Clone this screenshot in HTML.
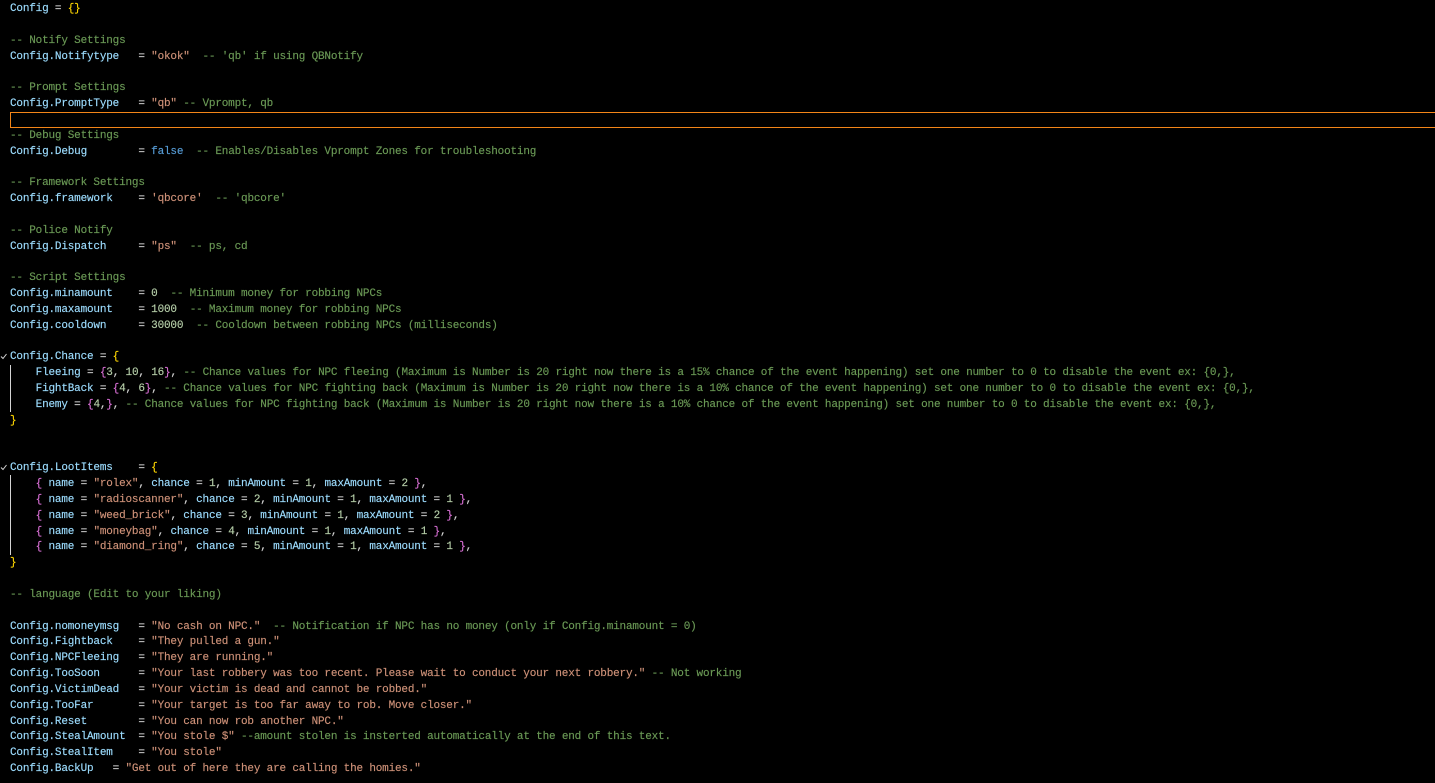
<!DOCTYPE html>
<html><head><meta charset="utf-8"><style>
html,body{margin:0;padding:0;background:#000;width:1435px;height:783px;overflow:hidden}
#e{position:relative;width:1435px;height:783px;overflow:hidden;font-family:"Liberation Mono",monospace;font-size:11px;letter-spacing:-.185px;color:#d4d4d4;-webkit-text-stroke:.15px}
#e div.l{position:absolute;left:10px;height:16px;line-height:16px;white-space:pre;margin-top:1px}
.c{color:#9cdcfe}.m{color:#6a9955}.s{color:#ce9178}.n{color:#b5cea8}.k{color:#569cd6}.y{color:#ffd700}.p{color:#da70d6}.b{color:#179fff}
.g{position:absolute;left:10px;width:1px;background:#d4d4d4}
</style></head><body><div id="e">
<div style="position:absolute;left:10px;top:112px;right:-2px;height:14px;border:1px solid #f38518"></div>
<div class="g" style="top:365px;height:47px"></div>
<div class="g" style="top:475px;height:80px"></div>
<svg style="position:absolute;left:0;top:352px" width="8" height="8"><path d="M1 4.5L3 6.5L6.5 2" fill="none" stroke="#d4d4d4"/></svg>
<svg style="position:absolute;left:0;top:463px" width="8" height="8"><path d="M1 4.5L3 6.5L6.5 2" fill="none" stroke="#d4d4d4"/></svg>
<div class="l" style="top:0px"><span class="c">Config</span> = <span class="y">{}</span></div>
<div class="l" style="top:32px"><span class="m">-- Notify Settings</span></div>
<div class="l" style="top:48px"><span class="c">Config.Notifytype</span>   = <span class="s">"okok"</span>  <span class="m">-- 'qb' if using QBNotify</span></div>
<div class="l" style="top:79px"><span class="m">-- Prompt Settings</span></div>
<div class="l" style="top:95px"><span class="c">Config.PromptType</span>   = <span class="s">"qb"</span> <span class="m">-- Vprompt, qb</span></div>
<div class="l" style="top:127px"><span class="m">-- Debug Settings</span></div>
<div class="l" style="top:143px"><span class="c">Config.Debug</span>        = <span class="k">false</span>  <span class="m">-- Enables/Disables Vprompt Zones for troubleshooting</span></div>
<div class="l" style="top:174px"><span class="m">-- Framework Settings</span></div>
<div class="l" style="top:190px"><span class="c">Config.framework</span>    = <span class="s">'qbcore'</span>  <span class="m">-- 'qbcore'</span></div>
<div class="l" style="top:222px"><span class="m">-- Police Notify</span></div>
<div class="l" style="top:238px"><span class="c">Config.Dispatch</span>     = <span class="s">"ps"</span>  <span class="m">-- ps, cd</span></div>
<div class="l" style="top:269px"><span class="m">-- Script Settings</span></div>
<div class="l" style="top:285px"><span class="c">Config.minamount</span>    = <span class="n">0</span>  <span class="m">-- Minimum money for robbing NPCs</span></div>
<div class="l" style="top:301px"><span class="c">Config.maxamount</span>    = <span class="n">1000</span>  <span class="m">-- Maximum money for robbing NPCs</span></div>
<div class="l" style="top:317px"><span class="c">Config.cooldown</span>     = <span class="n">30000</span>  <span class="m">-- Cooldown between robbing NPCs (milliseconds)</span></div>
<div class="l" style="top:348px"><span class="c">Config.Chance</span> = <span class="y">{</span></div>
<div class="l" style="top:364px">    <span class="c">Fleeing</span> = <span class="p">{</span><span class="n">3</span>, <span class="n">10</span>, <span class="n">16</span><span class="p">}</span>, <span class="m">-- Chance values for NPC fleeing (Maximum is Number is 20 right now there is a 15% chance of the event happening) set one number to 0 to disable the event ex: {0,},</span></div>
<div class="l" style="top:380px">    <span class="c">FightBack</span> = <span class="p">{</span><span class="n">4</span>, <span class="n">6</span><span class="p">}</span>, <span class="m">-- Chance values for NPC fighting back (Maximum is Number is 20 right now there is a 10% chance of the event happening) set one number to 0 to disable the event ex: {0,},</span></div>
<div class="l" style="top:396px">    <span class="c">Enemy</span> = <span class="p">{</span><span class="n">4</span>,<span class="p">}</span>, <span class="m">-- Chance values for NPC fighting back (Maximum is Number is 20 right now there is a 10% chance of the event happening) set one number to 0 to disable the event ex: {0,},</span></div>
<div class="l" style="top:412px"><span class="y">}</span></div>
<div class="l" style="top:459px"><span class="c">Config.LootItems</span>    = <span class="y">{</span></div>
<div class="l" style="top:475px">    <span class="p">{</span> <span class="c">name</span> = <span class="s">"rolex"</span>, <span class="c">chance</span> = <span class="n">1</span>, <span class="c">minAmount</span> = <span class="n">1</span>, <span class="c">maxAmount</span> = <span class="n">2</span> <span class="p">}</span>,</div>
<div class="l" style="top:491px">    <span class="p">{</span> <span class="c">name</span> = <span class="s">"radioscanner"</span>, <span class="c">chance</span> = <span class="n">2</span>, <span class="c">minAmount</span> = <span class="n">1</span>, <span class="c">maxAmount</span> = <span class="n">1</span> <span class="p">}</span>,</div>
<div class="l" style="top:507px">    <span class="p">{</span> <span class="c">name</span> = <span class="s">"weed_brick"</span>, <span class="c">chance</span> = <span class="n">3</span>, <span class="c">minAmount</span> = <span class="n">1</span>, <span class="c">maxAmount</span> = <span class="n">2</span> <span class="p">}</span>,</div>
<div class="l" style="top:523px">    <span class="p">{</span> <span class="c">name</span> = <span class="s">"moneybag"</span>, <span class="c">chance</span> = <span class="n">4</span>, <span class="c">minAmount</span> = <span class="n">1</span>, <span class="c">maxAmount</span> = <span class="n">1</span> <span class="p">}</span>,</div>
<div class="l" style="top:538px">    <span class="p">{</span> <span class="c">name</span> = <span class="s">"diamond_ring"</span>, <span class="c">chance</span> = <span class="n">5</span>, <span class="c">minAmount</span> = <span class="n">1</span>, <span class="c">maxAmount</span> = <span class="n">1</span> <span class="p">}</span>,</div>
<div class="l" style="top:554px"><span class="y">}</span></div>
<div class="l" style="top:586px"><span class="m">-- language (Edit to your liking)</span></div>
<div class="l" style="top:618px"><span class="c">Config.nomoneymsg</span>   = <span class="s">"No cash on NPC."</span>  <span class="m">-- Notification if NPC has no money (only if Config.minamount = 0)</span></div>
<div class="l" style="top:633px"><span class="c">Config.Fightback</span>    = <span class="s">"They pulled a gun."</span></div>
<div class="l" style="top:649px"><span class="c">Config.NPCFleeing</span>   = <span class="s">"They are running."</span></div>
<div class="l" style="top:665px"><span class="c">Config.TooSoon</span>      = <span class="s">"Your last robbery was too recent. Please wait to conduct your next robbery."</span> <span class="m">-- Not working</span></div>
<div class="l" style="top:681px"><span class="c">Config.VictimDead</span>   = <span class="s">"Your victim is dead and cannot be robbed."</span></div>
<div class="l" style="top:697px"><span class="c">Config.TooFar</span>       = <span class="s">"Your target is too far away to rob. Move closer."</span></div>
<div class="l" style="top:713px"><span class="c">Config.Reset</span>        = <span class="s">"You can now rob another NPC."</span></div>
<div class="l" style="top:728px"><span class="c">Config.StealAmount</span>  = <span class="s">"You stole $"</span> <span class="m">--amount stolen is insterted automatically at the end of this text.</span></div>
<div class="l" style="top:744px"><span class="c">Config.StealItem</span>    = <span class="s">"You stole"</span></div>
<div class="l" style="top:760px"><span class="c">Config.BackUp</span>   = <span class="s">"Get out of here they are calling the homies."</span></div>
</div></body></html>
